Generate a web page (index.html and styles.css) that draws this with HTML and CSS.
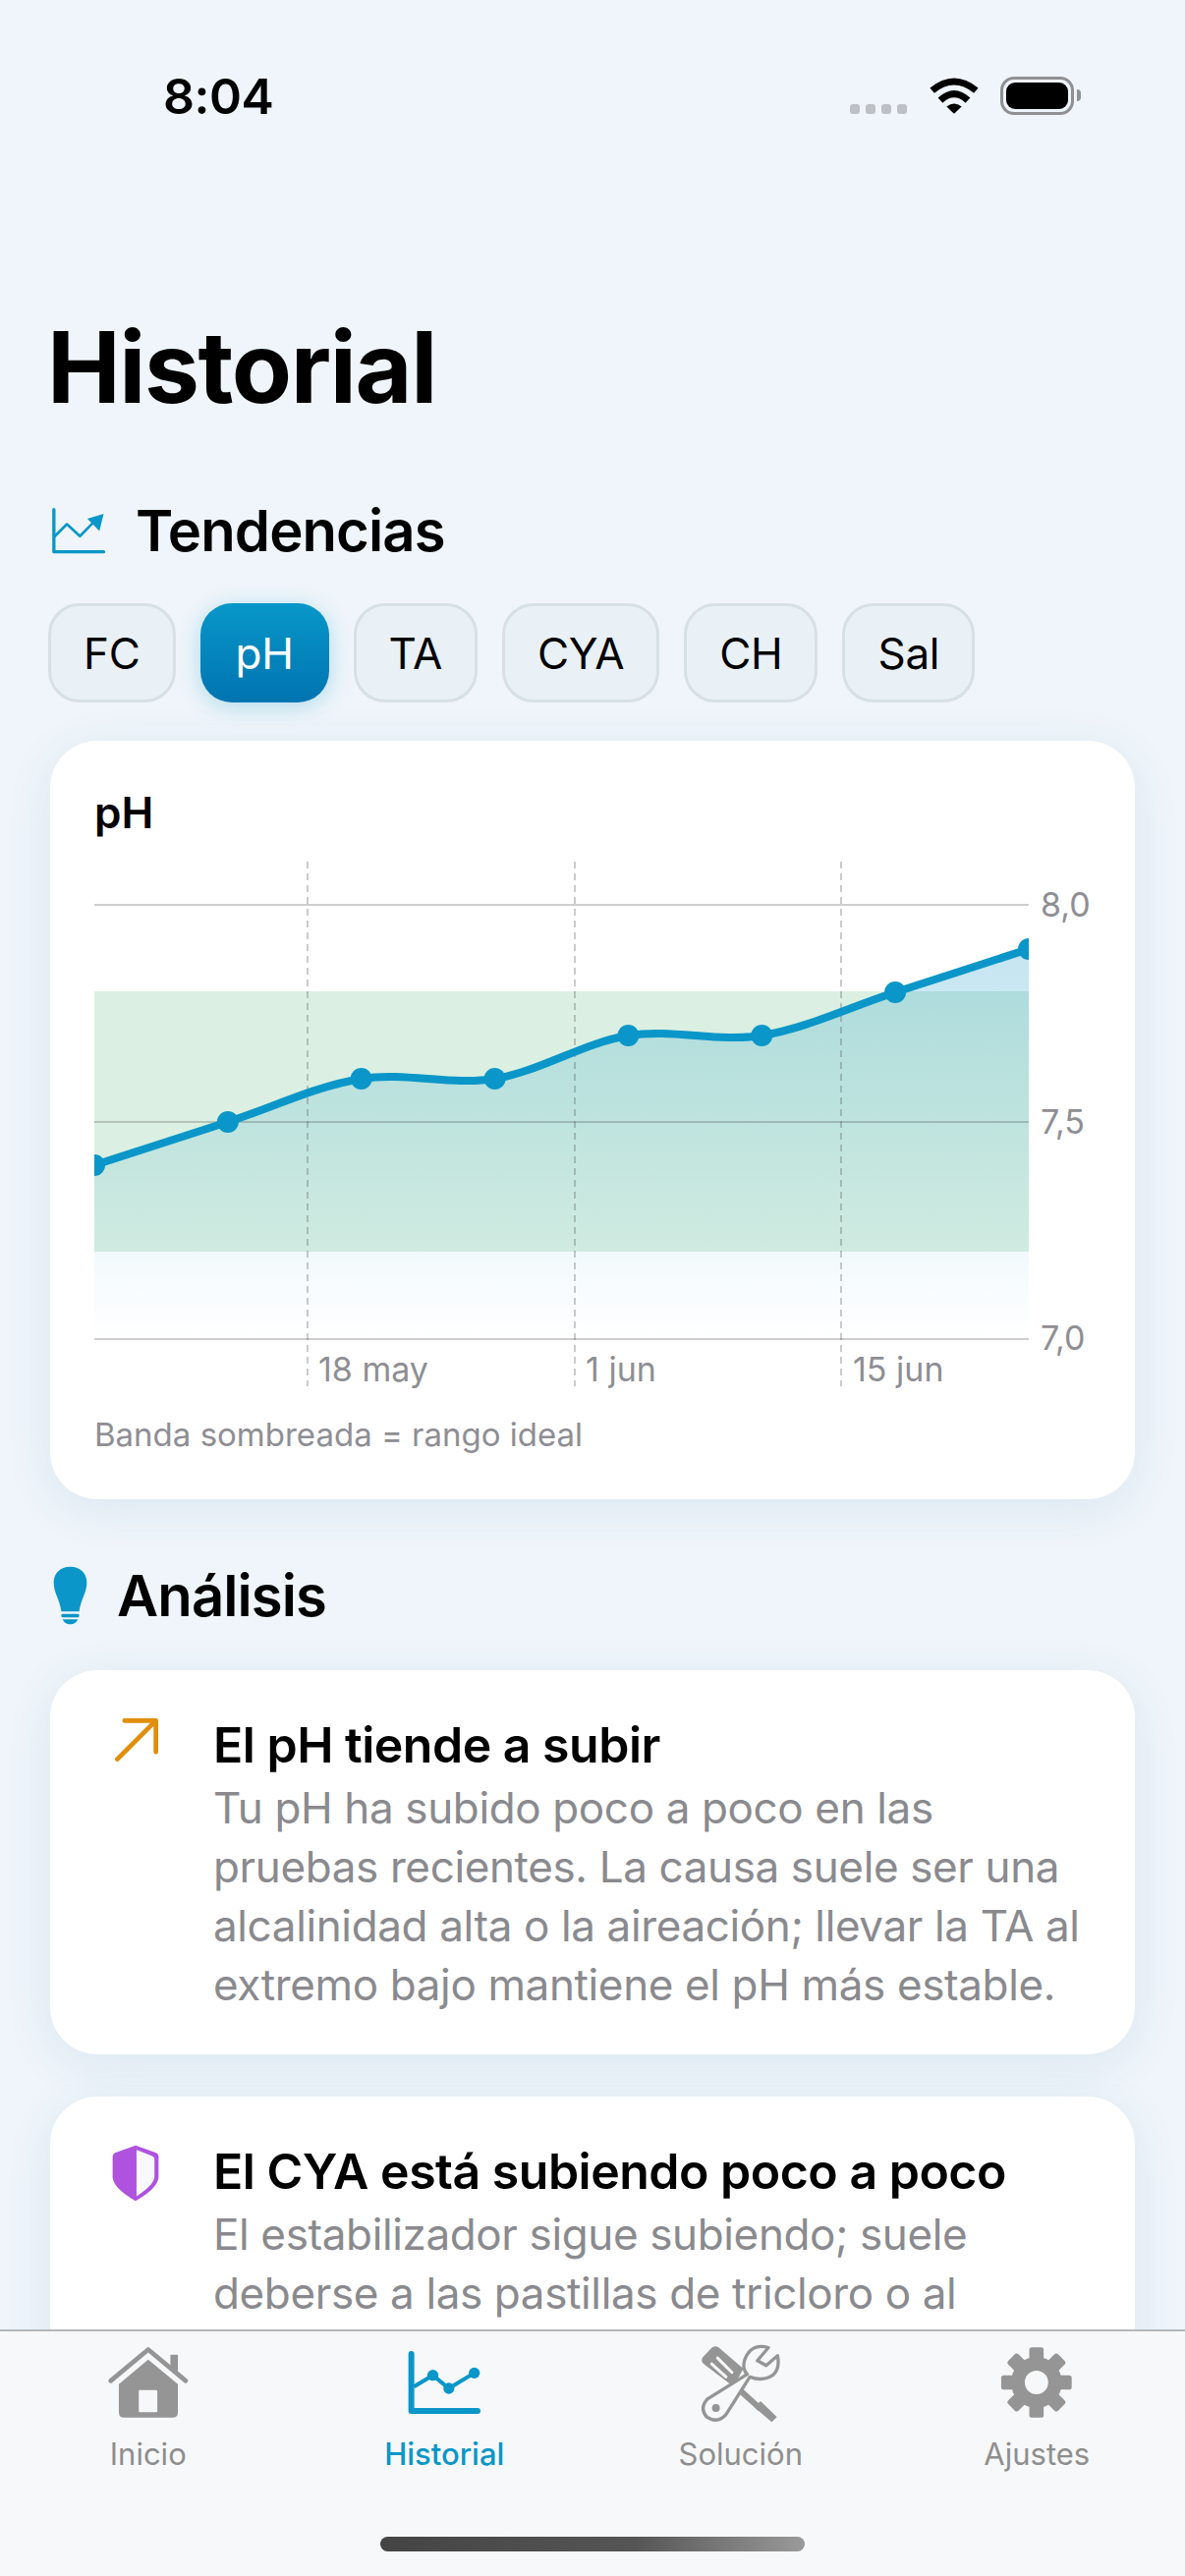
FILE: index.html
```html
<!DOCTYPE html>
<html lang="es">
<head>
<meta charset="utf-8">
<title>Historial</title>
<link rel="stylesheet" href="styles.css">
</head>
<body>
<div class="phone">
  <header class="status">
    <span class="clock">8:04</span>
    <div class="status-icons">
      <div class="signal"><i></i><i></i><i></i><i></i></div>
      <svg class="wifi" viewBox="377 88 150 110"><path class="wifi-arc" d="M385 127Q452 72 519 127"/><path class="wifi-arc" d="M410 157Q452 118 494 157"/><path class="ink" d="M429 176Q452 158 475 176L452 198Z"/></svg>
      <div class="battery"><div class="battery-fill"></div></div>
      <div class="battery-nub"></div>
    </div>
  </header>

  <main class="content">
    <h1 class="title">Historial</h1>

    <section>
      <h2 class="section-head head-trend">
        <svg class="trend-icon" viewBox="100 85 165 142"><path class="tint-line wide" d="M105 90V220H258"/><path class="tint-line" d="M108 172L145 135L185 172L232 124"/><path class="tint-fill" d="M258 103L208 118L245 156Z"/></svg>
        Tendencias
      </h2>
      <div class="chips">
        <button class="chip">FC</button>
        <button class="chip chip-on">pH</button>
        <button class="chip">TA</button>
        <button class="chip">CYA</button>
        <button class="chip">CH</button>
        <button class="chip">Sal</button>
      </div>
    </section>

    <section class="card chart-card">
      <h3 class="chart-title">pH</h3>
      <svg class="chart" viewBox="96 872 1059 545">
        <defs>
          <linearGradient id="areaFade" x1="0" y1="966" x2="0" y2="1363" gradientUnits="userSpaceOnUse">
            <stop offset="0" stop-color="#0a93c8" stop-opacity=".24"/>
            <stop offset="1" stop-color="#0a93c8" stop-opacity="0"/>
          </linearGradient>
          <clipPath id="plotClip"><rect x="96" y="872" width="951" height="545"/></clipPath>
        </defs>
        <rect class="band" x="96" y="1009" width="951" height="265"/>
        <path fill="url(#areaFade)" d="M96 1186C141.3 1171.3 186.6 1156.7 231.9 1142C277.2 1127.3 322.4 1105.3 367.7 1098C413 1090.7 458.3 1105.3 503.6 1098C548.9 1090.7 594.1 1061.3 639.4 1054C684.7 1046.7 730 1061.3 775.3 1054C820.6 1046.7 865.8 1024.7 911.1 1010C956.4 995.3 1001.7 980.7 1047 966V1363H96Z"/>
        <path class="grid" d="M96 921H1047M96 1142H1047M96 1363H1047"/>
        <path class="dash" d="M313 877V1411M585 877V1411M856 877V1411"/>
        <g clip-path="url(#plotClip)">
          <path class="curve" d="M96 1186C141.3 1171.3 186.6 1156.7 231.9 1142C277.2 1127.3 322.4 1105.3 367.7 1098C413 1090.7 458.3 1105.3 503.6 1098C548.9 1090.7 594.1 1061.3 639.4 1054C684.7 1046.7 730 1061.3 775.3 1054C820.6 1046.7 865.8 1024.7 911.1 1010C956.4 995.3 1001.7 980.7 1047 966"/>
          <circle class="dot" cx="96" cy="1186" r="11"/>
          <circle class="dot" cx="231.9" cy="1142" r="11"/>
          <circle class="dot" cx="367.7" cy="1098" r="11"/>
          <circle class="dot" cx="503.6" cy="1098" r="11"/>
          <circle class="dot" cx="639.4" cy="1054" r="11"/>
          <circle class="dot" cx="775.3" cy="1054" r="11"/>
          <circle class="dot" cx="911.1" cy="1010" r="11"/>
          <circle class="dot" cx="1047" cy="966" r="11"/>
        </g>
        <text class="axis" x="1059" y="933">8,0</text>
        <text class="axis" x="1059" y="1154">7,5</text>
        <text class="axis" x="1059" y="1374">7,0</text>
        <text class="axis" x="324" y="1406">18 may</text>
        <text class="axis" x="596" y="1406">1 jun</text>
        <text class="axis" x="868" y="1406">15 jun</text>
      </svg>
      <p class="chart-note">Banda sombreada = rango ideal</p>
    </section>

    <h2 class="section-head head-analysis">
      <svg class="bulb-icon" viewBox="160 106 104 178"><path class="tint-fill" d="M212 108C180 108 162 130 162 155C162 188 180 205 185 243H239C244 205 262 188 262 155C262 130 244 108 212 108Z"/><rect class="tint-fill" x="185" y="251" width="54" height="10" rx="4"/><path class="tint-fill" d="M189 267H235C232 276 222 282 212 282C202 282 192 276 189 267Z"/></svg>
      Análisis
    </h2>

    <article class="card insight">
      <svg class="insight-icon arrow-icon" viewBox="345 565 137 137"><path class="arrow-line" d="M355 692L468 579M377 575H472V670"/></svg>
      <div class="insight-text">
        <h3 class="insight-title">El pH tiende a subir</h3>
        <p class="insight-body">Tu pH ha subido poco a poco en las pruebas recientes. La causa suele ser una alcalinidad alta o la aireación; llevar la TA al extremo bajo mantiene el pH más estable.</p>
      </div>
    </article>

    <article class="card insight insight-cut">
      <svg class="insight-icon shield-icon" viewBox="160 66 150 181"><path class="shield-out" d="M235 68L298 91Q308 95 308 105V170Q305 205 235 245Q165 205 162 170V105Q162 95 172 91Z"/><path class="shield-in" d="M238 82L288 102Q295 105 295 112V170Q292 195 238 230Z"/></svg>
      <div class="insight-text">
        <h3 class="insight-title">El CYA está subiendo poco a poco</h3>
        <p class="insight-body">El estabilizador sigue subiendo; suele deberse a las pastillas de tricloro o al</p>
      </div>
    </article>
  </main>

  <nav class="tabbar">
    <a class="tab">
      <svg class="tab-icon" viewBox="80 60 265 240"><rect class="gray-fill" x="280" y="92" width="23" height="50"/><path class="roof" d="M97 172L212 76L327 172"/><path class="gray-fill" d="M212 107L303 182V268Q303 285 286 285H138Q122 285 122 268V182Z"/><rect class="door" x="183" y="200" width="57" height="68" rx="3"/></svg>
      <span>Inicio</span>
    </a>
    <a class="tab tab-on">
      <svg class="tab-icon" viewBox="985 60 265 240"><path class="tab-axis" d="M1017 90V264H1220"/><path class="tab-line" d="M1025 190L1083 155L1132 195L1210 148"/><circle class="tint-fill" cx="1083" cy="155" r="17"/><circle class="tint-fill" cx="1132" cy="195" r="17"/><circle class="tint-fill" cx="1210" cy="148" r="17"/></svg>
      <span>Historial</span>
    </a>
    <a class="tab">
      <svg class="tab-icon" viewBox="145 60 265 240"><path class="gray-fill" d="M163 97L188 71Q198 62 210 70L285 135L255 190L163 120Q152 108 163 97Z"/><path class="slot" d="M206 102L250 146M188 120L232 160"/><path class="driver" d="M262 190L338 258"/><path class="gray-fill" d="M338 234L388 283L372 298L318 252Z"/><path class="wrench" d="M362 70Q310 55 290 105Q280 135 297 152L175 228Q150 255 172 282Q205 305 232 275L305 160Q345 175 375 155Q398 135 390 95L355 125L328 110Z"/><circle class="gray-fill" cx="201" cy="255" r="12"/></svg>
      <span>Solución</span>
    </a>
    <a class="tab">
      <svg class="tab-icon" viewBox="1052 60 265 240"><circle class="gray-fill" cx="1184" cy="177" r="78"/><rect class="gray-fill" x="1162" y="69" width="44" height="50" rx="8"/><rect class="gray-fill" x="1162" y="69" width="44" height="50" rx="8" transform="rotate(45 1184 177)"/><rect class="gray-fill" x="1162" y="69" width="44" height="50" rx="8" transform="rotate(90 1184 177)"/><rect class="gray-fill" x="1162" y="69" width="44" height="50" rx="8" transform="rotate(135 1184 177)"/><rect class="gray-fill" x="1162" y="69" width="44" height="50" rx="8" transform="rotate(180 1184 177)"/><rect class="gray-fill" x="1162" y="69" width="44" height="50" rx="8" transform="rotate(225 1184 177)"/><rect class="gray-fill" x="1162" y="69" width="44" height="50" rx="8" transform="rotate(270 1184 177)"/><rect class="gray-fill" x="1162" y="69" width="44" height="50" rx="8" transform="rotate(315 1184 177)"/><circle class="door" cx="1184" cy="177" r="36"/></svg>
      <span>Ajustes</span>
    </a>
    <div class="home-bar"></div>
  </nav>
</div>
</body>
</html>
```

FILE: styles.css
```css
* { box-sizing: border-box; }
html, body { margin: 0; padding: 0; }
body { width: 1206px; height: 2622px; overflow: hidden; background: #eff5fa; font-family: "Inter", "Noto Sans", sans-serif; color: #000; }
.phone { position: relative; width: 1206px; height: 2622px; overflow: hidden; background: #eff5fa; }

.status { display: flex; justify-content: space-between; align-items: flex-start; height: 140px; padding: 70px 106px 0 166px; }
.clock { font-size: 50px; line-height: 56px; font-weight: 600; letter-spacing: -0.5px; }
.status-icons { display: flex; align-items: flex-start; padding-top: 8px; }
.signal { display: flex; gap: 6px; margin: 28px 23px 0 0; }
.signal i { width: 10px; height: 10px; border-radius: 3px; background: #bdc1c6; }
.wifi { width: 50px; height: 37px; margin: 1px 22px 0 0; }
.wifi-arc { fill: none; stroke: #000; stroke-width: 21; }
.ink { fill: #000; }
.battery { width: 75px; height: 39px; padding: 3px; border: 3px solid #8e9094; border-radius: 14px; }
.battery-fill { width: 100%; height: 100%; background: #000; border-radius: 9px; }
.battery-nub { width: 4px; height: 12px; margin: 13px 0 0 3px; background: #8e9094; border-radius: 0 4px 4px 0; }

.content { padding: 0 51px; }
.title { margin: 174px 0 0 -3px; font-size: 100px; line-height: 120px; font-weight: 700; letter-spacing: -1.4px; }
.section-head { display: flex; align-items: center; margin: 0; font-size: 58px; line-height: 70px; font-weight: 600; letter-spacing: -0.9px; }
.head-trend { gap: 30px; margin-top: 71px; }
.head-analysis { gap: 30px; margin-top: 63px; }
.trend-icon { width: 55px; height: 47px; margin-left: 2px; }
.bulb-icon { width: 35px; height: 60px; margin-left: 3px; }
.tint-line { fill: none; stroke: #0a96c8; stroke-width: 8; stroke-linecap: round; stroke-linejoin: round; }
.tint-line.wide { stroke-width: 10; }
.tint-fill { fill: #0a96c8; }

.chips { display: flex; gap: 25px; margin: 39px 0 0 -2px; }
.chip { height: 101px; padding: 0 33px; border: 3px solid #d7e0e4; border-radius: 32px; background: #e9f1f6; font: 400 44px/1 "Inter", sans-serif; letter-spacing: -0.3px; color: #000; }
.chip-on { padding: 0 36px; border: 0; color: #fff; background: linear-gradient(#0897c9, #0074b0); box-shadow: 0 4px 22px rgba(10, 150, 200, .28); }

.card { background: #fff; border-radius: 48px; box-shadow: 0 10px 50px rgba(30, 100, 150, .09); }
.chart-card { margin-top: 39px; padding: 44px 0 0 45px; height: 772px; }
.chart-title { margin: 0; font-size: 44px; line-height: 58px; font-weight: 600; }
.chart { display: block; width: 1059px; height: 545px; margin-top: 16px; }
.band { fill: #dbf0e2; }
.grid { fill: none; stroke: rgba(60, 60, 60, .25); stroke-width: 2; }
.dash { fill: none; stroke: rgba(70, 70, 70, .28); stroke-width: 2; stroke-dasharray: 7 5; }
.curve { fill: none; stroke: #0a96c8; stroke-width: 8; }
.dot { fill: #0a96c8; }
.axis { font-size: 34px; fill: #8e8e93; }
.chart-note { margin: 22px 0 0; font-size: 33px; line-height: 42px; color: #8e8e93; }

.insight { display: flex; gap: 55px; margin-top: 43px; padding: 45px 40px 0 63px; height: 391px; }
.head-analysis + .insight { margin-top: 41px; }
.insight-cut { height: 500px; }
.insight-icon { flex: none; }
.arrow-icon { width: 46px; height: 46px; margin: 3px 0 0 2px; }
.shield-icon { width: 48px; height: 60px; margin: 3px 0 0 0; }
.arrow-line { fill: none; stroke: #e08e0b; stroke-width: 14; stroke-linecap: round; stroke-linejoin: round; }
.shield-out { fill: #af52de; }
.shield-in { fill: #f8f8fd; }
.insight-text { min-width: 0; }
.insight-title { margin: 0 0 3px; font-size: 50px; line-height: 62px; font-weight: 600; letter-spacing: -0.5px; }
.insight-body { margin: 0; font-size: 44px; line-height: 60px; color: #8a8a8e; letter-spacing: -0.37px; }

.tabbar { position: absolute; left: 0; right: 0; bottom: 0; display: grid; grid-template-columns: repeat(4, 1fr); align-items: start; height: 251px; padding-top: 13px; background: #f7f8f9; border-top: 2px solid #b6b7b8; }
.tab { display: flex; flex-direction: column; align-items: center; color: #8e8e8e; font-size: 31px; line-height: 36px; }
.tab-on { color: #0a96c8; font-weight: 500; }
.tab-icon { display: block; width: 88px; height: 80px; margin-bottom: 14px; }
.gray-fill { fill: #959595; }
.roof { fill: none; stroke: #959595; stroke-width: 14; stroke-linecap: round; stroke-linejoin: round; }
.door { fill: #f7f8f9; }
.tab-axis { fill: none; stroke: #0a96c8; stroke-width: 18; stroke-linecap: round; stroke-linejoin: round; }
.tab-line { fill: none; stroke: #0a96c8; stroke-width: 12; }
.slot { fill: none; stroke: #f7f8f9; stroke-width: 9; stroke-linecap: round; }
.driver { fill: none; stroke: #959595; stroke-width: 18; }
.wrench { fill: #f7f8f9; stroke: #959595; stroke-width: 10; stroke-linejoin: round; }
.home-bar { position: absolute; left: 387px; top: 209px; width: 432px; height: 15px; border-radius: 8px; background: linear-gradient(90deg, #444 0%, #555 60%, #9a9a9a 100%); }
```
